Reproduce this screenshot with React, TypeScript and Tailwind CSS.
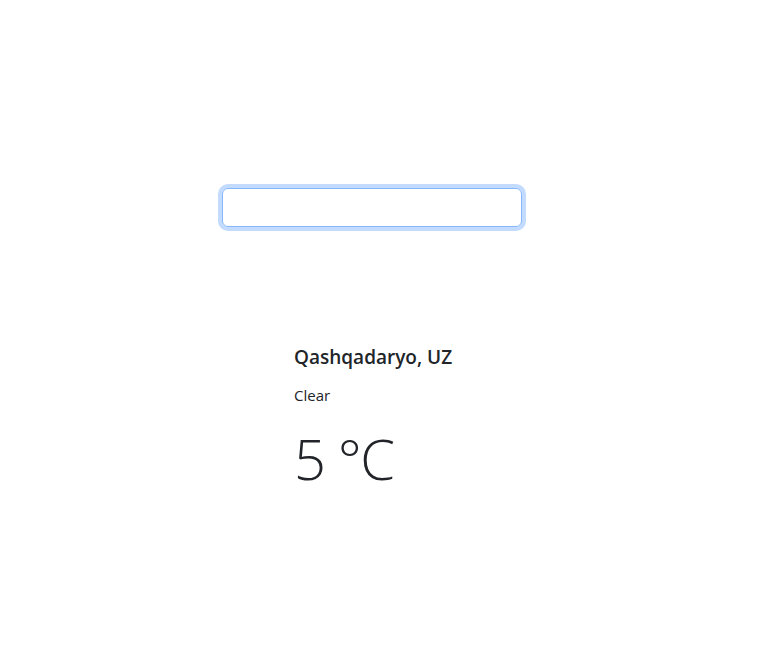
export default function App() {
  return (
    <div className="min-h-screen bg-white text-[#212529] font-['Open_Sans',sans-serif]">
      <div className="pt-[188px] pl-[222px]">
        <input
          autoFocus
          type="text"
          className="block w-[300px] h-[39px] px-3 text-base rounded-md border border-[#86b7fe] outline-none caret-[#212529] shadow-[0_0_0_4px_rgba(13,110,253,0.25)]"
        />
      </div>
      <div className="pl-[294px] pt-[118px]">
        <h5 className="text-[19px] font-semibold leading-6">Qashqadaryo, UZ</h5>
        <p className="mt-[16px] text-[15px] leading-5">Clear</p>
        <p className="mt-[20px] text-[56px] font-light leading-[1.2] tracking-tight">5 °C</p>
      </div>
    </div>
  );
}
